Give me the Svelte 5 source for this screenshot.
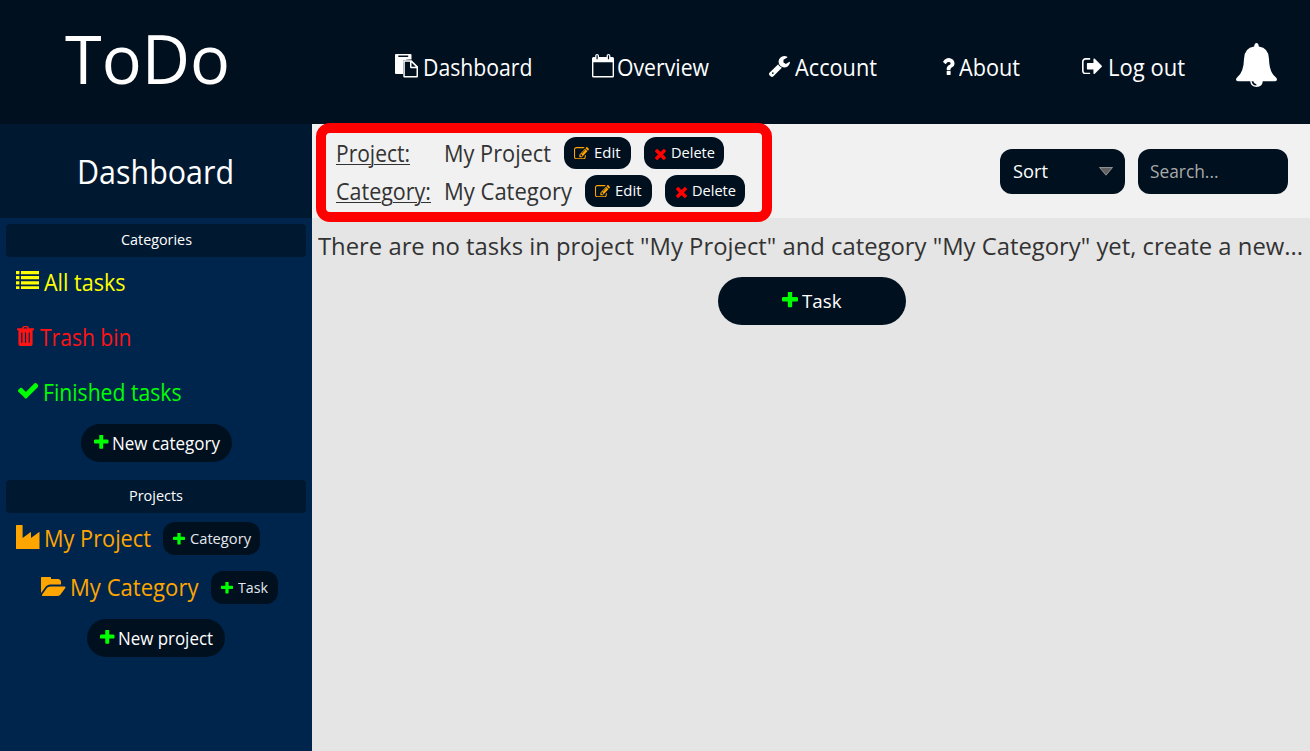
<script>
  // Makes a label take up the given width: wide labels are condensed, narrow ones are spaced out.
  function fit(node, width) {
    const natural = node.getBoundingClientRect().width;
    if (natural > width) {
      node.style.width = `${width}px`;
      node.style.transform = `scaleX(${width / natural})`;
    } else {
      node.style.letterSpacing = `${(width - natural) / node.textContent.length}px`;
    }
  }

  const icons = {
    plus: ['192 192 1408 1408', 'M1600 736v192q0 40-28 68t-68 28h-416v416q0 40-28 68t-68 28h-192q-40 0-68-28t-28-68v-416h-416q-40 0-68-28t-28-68v-192q0-40 28-68t68-28h416v-416q0-40 28-68t68-28h192q40 0 68 28t28 68v416h416q40 0 68 28t28 68z'],
    check: ['121 334 1550 1188', 'M1671 566q0 40-28 68l-724 724-136 136q-28 28-68 28t-68-28l-136-136-362-362q-28-28-28-68t28-68l136-136q28-28 68-28t68 28l294 295 656-657q28-28 68-28t68 28l136 136q28 28 28 68z'],
    times: ['302 366 1188 1188', 'M1490 1322q0 40-28 68l-136 136q-28 28-68 28t-68-28l-294-294-294 294q-28 28-68 28t-68-28l-136-136q-28-28-28-68t28-68l294-294-294-294q-28-28-28-68t28-68l136-136q28-28 68-28t68 28l294 294 294-294q28-28 68-28t68 28l136 136q28 28 28 68t-28 68l-294 294 294 294q28 28 28 68z'],
    edit: ['0 128 1792 1408', 'M888 1184l116-116-152-152-116 116v56h96v96h56zm440-720q-16-16-33 1l-350 350q-17 17-1 33t33-1l350-350q17-17 1-33zm80 594v190q0 119-84.5 203.5t-203.5 84.5h-832q-119 0-203.5-84.5t-84.5-203.5v-832q0-119 84.5-203.5t203.5-84.5h832q63 0 117 25 15 7 18 23 3 17-9 29l-49 49q-14 14-32 8-23-6-45-6h-832q-66 0-113 47t-47 113v832q0 66 47 113t113 47h832q66 0 113-47t47-113v-126q0-13 9-22l64-64q15-15 35-7t20 29zm-96-738l288 288-672 672h-288v-288zm444 132l-92 92-288-288 92-92q28-28 68-28t68 28l152 152q28 28 28 68t-28 68z'],
    folder: ['0 256 1879 1280', 'M1879 952q0 31-31 66l-336 396q-43 51-120.5 86.5t-143.5 35.5h-1088q-34 0-60.5-13t-26.5-43q0-31 31-66l336-396q43-51 120.5-86.5t143.5-35.5h1088q34 0 60.5 13t26.5 43zm-343-344v160h-832q-94 0-197 47.5t-164 119.5l-337 396-5 6q0-4-.5-12.5t-.5-12.5v-960q0-92 66-158t158-66h320q92 0 158 66t66 158v32h544q92 0 158 66t66 158z'],
    question: ['386 256 1018 1280', 'M1088 1256v240q0 16-12 28t-28 12h-240q-16 0-28-12t-12-28v-240q0-16 12-28t28-12h240q16 0 28 12t12 28zm316-600q0 54-15.5 101t-35 76.5-55 59.5-57.5 43.5-61 35.5q-41 23-68.5 65t-27.5 67q0 17-12 32.5t-28 15.5h-240q-15 0-25.5-18.5t-10.5-37.5v-45q0-83 65-156.5t143-108.5q59-27 84-56t25-76q0-42-46.5-74t-107.5-32q-65 0-108 29-35 25-107 115-13 16-31 16-12 0-25-8l-164-125q-13-10-15.5-25t5.5-28q160-266 464-266 80 0 161 31t146 83 106 127.5 41 158.5z'],
    wrench: ['85 128 1641 1643', 'M448 1472q0-26-19-45t-45-19-45 19-19 45 19 45 45 19 45-19 19-45zm644-420l-682 682q-37 37-90 37-52 0-91-37l-106-108q-38-36-38-90 0-53 38-91l681-681q39 98 114.5 173.5t173.5 114.5zm634-435q0 39-23 106-47 134-164.5 217.5t-258.5 83.5q-185 0-316.5-131.5t-131.5-316.5 131.5-316.5 316.5-131.5q58 0 121.5 16.5t107.5 46.5q16 11 16 28t-16 28l-293 169v224l193 107q5-3 79-48.5t135.5-81 70.5-35.5q15 0 23.5 10t8.5 25z'],
    logout: ['64 256 1568 1280', 'M704 1440q0 4 1 20t.5 26.5-3 23.5-10 19.5-20.5 6.5h-320q-119 0-203.5-84.5t-84.5-203.5v-704q0-119 84.5-203.5t203.5-84.5h320q13 0 22.5 9.5t9.5 22.5q0 4 1 20t.5 26.5-3 23.5-10 19.5-20.5 6.5h-320q-66 0-113 47t-47 113v704q0 66 47 113t113 47h312l11.5 1 11.5 3 8 5.5 7 9 2 13.5zm928-544q0 26-19 45l-544 544q-19 19-45 19t-45-19-19-45v-288h-448q-26 0-45-19t-19-45v-384q0-26 19-45t45-19h448v-288q0-26 19-45t45-19 45 19l544 544q19 19 19 45z'],
    paste: ['0 0 23 23.5', 'M1 0H15.5Q16.5 0 16.5 1V5.5H14Q8 5.5 8 9V20H1Q0 20 0 19V1Q0 0 1 0ZM3.3 1.5V3H13.2V1.5ZM9.3 6.2H16.6L23 12.6V22.3Q23 23.5 22 23.5H9.3Q8.3 23.5 8.3 22.5V7.2Q8.3 6.2 9.3 6.2ZM9.8 7.7V22H21.5V14.2H16.3Q15 14.2 15 13V7.7ZM16.5 8.4V12.7H20.8Z'],
    calendar: ['0 0 22 23.5', 'M1.5 3H3.2V1.7Q3.2 0 5 0Q7 0 7 1.7V3H14.6V1.7Q14.6 0 16.5 0Q18.4 0 18.4 1.7V3H20.5Q22 3 22 4.5V22Q22 23.5 20.5 23.5H1.5Q0 23.5 0 22V4.5Q0 3 1.5 3ZM1.4 8.3V22.1H20.6V8.3ZM4.5 1.3V5.2H5.7V1.3ZM15.9 1.3V5.2H17.1V1.3Z'],
    list: ['0 0 23 18.5', 'M0 0H3.4V3.2H0ZM5 0H23V3.2H5ZM0 5.1H3.4V8.3H0ZM5 5.1H23V8.3H5ZM0 10.2H3.4V13.4H0ZM5 10.2H23V13.4H5ZM0 15.3H3.4V18.5H0ZM5 15.3H23V18.5H5Z'],
    trash: ['0 0 17 20', 'M5 2.2L5.6 .8Q6 0 6.8 0H10.2Q11 0 11.4 .8L12 2.2H16.4Q17 2.2 17 3V4.2H15.6V18Q15.6 20 13.8 20H3.2Q1.4 20 1.4 18V4.2H0V3Q0 2.2.6 2.2ZM6.5 2.4H10.5L10 1.3H7ZM4.2 6.4V16.8H5.4V6.4ZM7.9 6.4V16.8H9.1V6.4ZM11.6 6.4V16.8H12.8V6.4Z'],
    industry: ['0 0 23.5 24', 'M0 .6Q0 0 .6 0H6Q6.6 0 6.6.6V13L14.4 7.2Q15 6.8 15 7.5V13L22.8 7.2Q23.5 6.8 23.5 7.5V23.4Q23.5 24 22.9 24H.6Q0 24 0 23.4Z'],
    bell: ['0 0 41 44', 'M20.5 0Q22.6 0 22.8 3.6Q32.8 5 33 16Q33.3 29 39.5 34Q41 35.4 41 36.5Q41 38.3 39 38.3H26.8Q26.3 44 20.5 44Q14.8 44 14.2 38.3H2Q0 38.3 0 36.5Q0 35.4 1.5 34Q7.7 29 8 16Q8.2 5 18.2 3.6Q18.4 0 20.5 0ZM15.6 38.3Q16.2 42.4 20.5 42.6V41.4Q17.9 41 17.3 38.3Z'],
  };
  const cutouts = ['edit', 'paste', 'calendar', 'trash', 'bell'];

  const nav = [
    { icon: 'paste', label: 'Dashboard', width: 109.5 },
    { icon: 'calendar', label: 'Overview', width: 92 },
    { icon: 'wrench', label: 'Account', width: 82 },
    { icon: 'question', label: 'About', width: 61 },
    { icon: 'logout', label: 'Log out', width: 77 },
  ];
  const filters = [
    { icon: 'list', label: 'All tasks', width: 81.5 },
    { icon: 'trash', label: 'Trash bin', width: 91.5 },
    { icon: 'check', label: 'Finished tasks', width: 138.5 },
  ];
  const details = [
    { key: 'Project:', keyWidth: 74, name: 'My Project', width: 107 },
    { key: 'Category:', keyWidth: 95, name: 'My Category', width: 128 },
  ];
</script>

{#snippet icon(name)}
  <svg class="icon {name}" viewBox={icons[name][0]} preserveAspectRatio="none" aria-hidden="true">
    <path fill="currentColor" fill-rule={cutouts.includes(name) ? 'evenodd' : 'nonzero'} d={icons[name][1]} />
  </svg>
{/snippet}

<div class="app">
  <header>
    <div class="logo"><span use:fit={165}>ToDo</span></div>
    <nav>
      {#each nav as item}
        <a class="nav-{item.icon}" href="#top">{@render icon(item.icon)}<span use:fit={item.width}>{item.label}</span></a>
      {/each}
    </nav>
    {@render icon('bell')}
  </header>

  <div class="body">
    <aside>
      <h1><span use:fit={157}>Dashboard</span></h1>
      <div class="bar"><span use:fit={71}>Categories</span></div>
      {#each filters as item}
        <div class="row f-{item.icon}">{@render icon(item.icon)}<span use:fit={item.width}>{item.label}</span></div>
      {/each}
      <button class="pill cat">{@render icon('plus')}<span use:fit={108}>New category</span></button>
      <div class="bar second"><span use:fit={54}>Projects</span></div>
      <div class="row project">
        {@render icon('industry')}<span use:fit={107}>My Project</span>
        <button class="small add-cat">{@render icon('plus')}<span use:fit={61}>Category</span></button>
      </div>
      <div class="row category">
        {@render icon('folder')}<span use:fit={128.5}>My Category</span>
        <button class="small add-task">{@render icon('plus')}<span use:fit={30}>Task</span></button>
      </div>
      <button class="pill proj">{@render icon('plus')}<span use:fit={95}>New project</span></button>
    </aside>

    <main>
      <section class="top">
        <div class="details">
          {#each details as d}
            <div class="detail">
              <div class="key"><u use:fit={d.keyWidth}>{d.key}</u></div>
              <span use:fit={d.width}>{d.name}</span>
              <button class="small edit-btn">{@render icon('edit')}<span use:fit={26.5}>Edit</span></button>
              <button class="small delete-btn">{@render icon('times')}<span use:fit={44}>Delete</span></button>
            </div>
          {/each}
          <div class="marker"></div>
        </div>
        <div class="field sort"><span use:fit={35}>Sort</span>
          <svg class="arrow" viewBox="0 0 14 9"><path d="M.5.5H13.5L7 8.2Z" fill="#626262" stroke="#a5a5a5" stroke-width=".8" /></svg>
        </div>
        <div class="field search"><span use:fit={68.5}>Search...</span></div>
      </section>
      <p><span use:fit={985}>There are no tasks in project "My Project" and category "My Category" yet, create a new...</span></p>
      <button class="new-task">{@render icon('plus')}<span use:fit={39.5}>Task</span></button>
    </main>
  </div>
</div>

<style>
  :global(body) { margin: 0; overflow: hidden; }
  .app {
    width: 1310px; height: 751px; display: flex; flex-direction: column;
    font-family: "Open Sans", "Noto Sans", sans-serif; font-size: 23.5px; color: #fff;
    background: #e5e5e5; overflow: hidden;
  }
  span, u { display: block; white-space: nowrap; flex: none; transform-origin: 0 50%; }
  .icon { display: block; flex: none; }
  button { border: 0; margin: 0; padding: 0; color: #fff; font-family: inherit; background: #00101f; display: flex; align-items: center; box-sizing: border-box; text-align: left; }

  header { height: 124px; background: #00101f; display: flex; flex: none; }
  .logo { width: 330px; height: 116px; padding-left: 65px; box-sizing: border-box; display: flex; align-items: center; font-size: 67px; line-height: 90px; }
  nav { display: flex; height: 132px; width: 905.5px; }
  nav a { display: flex; align-items: center; color: inherit; text-decoration: none; box-sizing: border-box; }
  nav span, .row > span { margin-top: 2px; }
  .nav-paste { width: 197px; margin-left: 65px; }
  .nav-calendar { width: 177px; }
  .nav-wrench { width: 173px; }
  .nav-question { width: 140px; }
  .paste { width: 23px; height: 23.5px; margin-right: 4.5px; }
  .calendar { width: 22px; height: 23.5px; margin-right: 3px; }
  .wrench { width: 21px; height: 21px; margin-right: 4.5px; }
  .question { width: 12.5px; height: 17px; margin-right: 4px; }
  .logout { width: 20px; height: 16.5px; margin-right: 5.5px; }
  .bell { width: 41px; height: 44px; margin-top: 43px; }

  .body { display: flex; flex: 1; }
  aside { width: 312px; background: #00254c; flex: none; display: flex; flex-direction: column; }
  h1 { margin: 0 0 6px; height: 94px; background: #001830; font-size: 33px; font-weight: 400; display: flex; align-items: center; justify-content: center; flex: none; }
  h1 span { margin: 1px 2px 0 0; }
  .bar { height: 33px; margin: 0 6px; border-radius: 4px; background: #001830; font-size: 14.7px; display: flex; align-items: center; justify-content: center; padding-bottom: 3px; box-sizing: border-box; flex: none; }
  .second { margin-top: 18px; }
  .row { height: 48px; display: flex; align-items: center; flex: none; }
  .f-list { color: #ff0; padding-left: 16px; }
  .f-trash { color: #ff1414; padding-left: 17px; margin-top: 7px; }
  .f-check { color: #0f0; padding-left: 17.5px; margin-top: 7px; }
  .list { width: 23px; height: 18.5px; margin: 0 5px 2px 0; }
  .trash { width: 17px; height: 20px; margin-right: 5.5px; }
  .check { width: 20.5px; height: 15.5px; margin-right: 4.5px; }
  .pill { height: 38px; border-radius: 19px; font-size: 18px; flex: none; }
  .pill .plus { width: 14.5px; height: 14.5px; margin: 0 3.5px 2px 13px; }
  .cat { width: 151px; margin: 9px 0 0 81px; }
  .proj { width: 138px; margin: 9px 0 0 87px; }
  .project { padding-left: 16px; color: orange; }
  .category { padding-left: 41px; color: orange; margin-top: 1px; }
  .industry { width: 23.5px; height: 24px; margin-right: 4.5px; }
  .folder { width: 24.5px; height: 19px; margin-right: 4.5px; }

  .small { height: 33px; border-radius: 12px; font-size: 15px; flex: none; }
  .row .small { margin-top: 3px; color: #e4e8ec; }
  .small span { margin-bottom: 2px; }
  .small .plus { width: 12px; height: 12px; margin: 0 4.5px 0 10px; }
  .add-cat { width: 97px; margin-left: 12px; }
  .add-task { width: 67px; margin-left: 12.5px; }
  .plus { color: #0f0; }

  main { width: 998px; flex: none; color: #333; }
  .top { height: 94px; background: #f1f1f1; display: flex; align-items: center; color: #fff; }
  .details { position: relative; width: 688px; height: 94px; padding-top: 10px; box-sizing: border-box; }
  .detail { height: 38px; display: flex; align-items: center; color: #333; }
  .key { width: 108px; padding-left: 23.5px; height: 38px; display: flex; align-items: center; }
  .key u { text-decoration-thickness: 1px; text-underline-offset: 2px; }
  .edit-btn { width: 67.5px; margin-left: 13px; }
  .delete-btn { width: 80.5px; margin-left: 12.5px; }
  .detail .small { height: 32.5px; }
  .edit { width: 15px; height: 12.5px; margin: 0 5.5px 0 10px; color: orange; }
  .times { width: 11px; height: 11px; margin: 3px 5px 0 11px; color: red; }
  .marker { position: absolute; left: 4px; top: -1px; width: 456px; height: 99px; box-sizing: border-box; border: 10px solid red; border-radius: 14px; }
  .field { height: 45px; border-radius: 12px; background: #00101f; box-sizing: border-box; display: flex; align-items: center; font-size: 18.5px; padding: 0 12px 2px; }
  .sort { width: 125px; justify-content: space-between; padding-left: 12.5px; }
  .arrow { width: 14px; height: 9px; margin-top: 3px; }
  .search { width: 150px; margin-left: 13px; color: #a9a9a9; }
  p { margin: 0; height: 55px; padding-left: 6px; display: flex; align-items: center; font-size: 24.5px; }
  .new-task { width: 188px; height: 48px; border-radius: 24px; margin: 4px 0 0 406px; font-size: 19px; }
  .new-task .plus { width: 16px; height: 16px; margin: 0 4px 2px 64px; }
</style>
